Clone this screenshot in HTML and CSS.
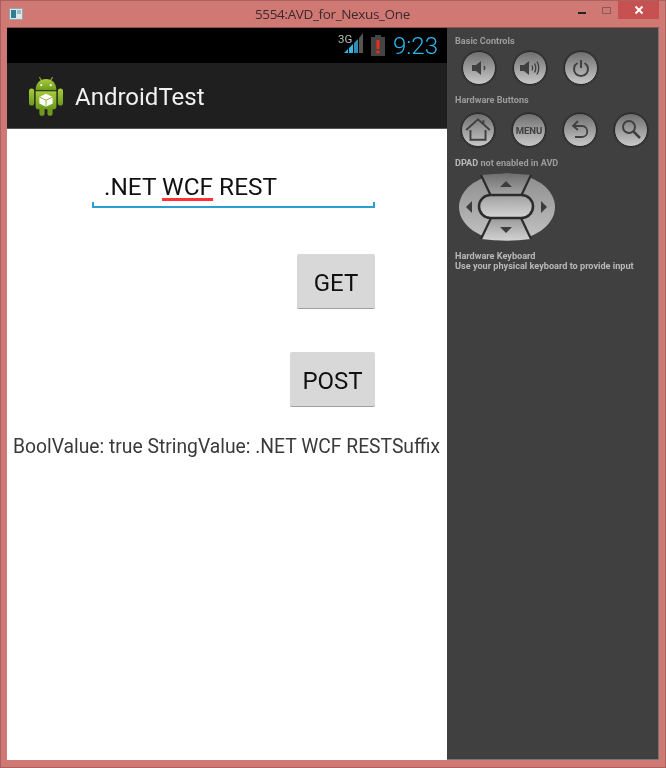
FILE: index.html
```html
<!DOCTYPE html>
<html lang="en">
<head>
    <meta charset="UTF-8">
    <meta name="viewport" content="width=device-width, initial-scale=1.0">
    <title>5554:AVD_for_Nexus_One</title>
    <link rel="stylesheet" href="styles.css">
</head>
<body>
    <div class="window">
        <div class="titlebar">
            <svg class="app-icon" width="14" height="12" viewBox="0 0 14 12">
                <rect x="0.5" y="0.5" width="13" height="11" fill="#dfe6e8" stroke="#9aa5ab"/>
                <rect x="2" y="2" width="5" height="8" fill="#2f7f8f"/>
                <rect x="8" y="2" width="4" height="4" fill="#8fc0c4"/>
            </svg>
            <div class="window-title">5554:AVD_for_Nexus_One</div>
            <div class="window-controls">
                <span class="win-min"></span>
                <span class="win-max"></span>
                <span class="win-close">
                    <svg width="10" height="10" viewBox="0 0 10 10">
                        <path d="M1.5 1.5 L8.5 8.5 M8.5 1.5 L1.5 8.5" stroke="#fff" stroke-width="2"/>
                    </svg>
                </span>
            </div>
        </div>

        <div class="client">
            <div class="phone">
                <div class="status-bar">
                    <div class="signal">
                        <span class="signal-3g">3G</span>
                        <svg width="20" height="24" viewBox="0 0 20 24">
                            <path d="M0 22 L4 22 L4 18 Z" fill="#33b5e5"/>
                            <path d="M5 22 L9 22 L9 13 L5 17 Z" fill="#33b5e5"/>
                            <path d="M10 22 L14 22 L14 8 L10 12 Z" fill="#2b8fb5"/>
                            <path d="M15 22 L19 22 L19 2 L15 7 Z" fill="#555"/>
                        </svg>
                    </div>
                    <svg class="battery" width="14" height="21" viewBox="0 0 14 21">
                        <rect x="4" y="0" width="6" height="2" fill="#444"/>
                        <rect x="0" y="2" width="14" height="19" fill="#444"/>
                        <rect x="5.5" y="5" width="3" height="9" fill="#e8301c"/>
                        <rect x="5.5" y="15.5" width="3" height="3" fill="#e8301c"/>
                    </svg>
                    <span class="clock">9:23</span>
                </div>
                <div class="action-bar">
                    <svg class="robot" width="34" height="40" viewBox="0 0 36 42">
                        <defs>
                            <linearGradient id="robotGreen" x1="0" y1="0" x2="0" y2="1">
                                <stop offset="0" stop-color="#a6cc3c"/>
                                <stop offset="1" stop-color="#6d9a1c"/>
                            </linearGradient>
                        </defs>
                        <path d="M11 1 L13.500 5 M25 1 L22.500 5" stroke="#7fa828" stroke-width="1.200"/>
                        <path d="M7 15 C7 7 12 3 18 3 C24 3 29 7 29 15 Z" fill="url(#robotGreen)"/>
                        <circle cx="13" cy="9.500" r="1.100" fill="#fff"/>
                        <circle cx="23" cy="9.500" r="1.100" fill="#fff"/>
                        <rect x="0" y="13" width="5.500" height="18" rx="2.700" fill="url(#robotGreen)"/>
                        <rect x="30.500" y="13" width="5.500" height="18" rx="2.700" fill="url(#robotGreen)"/>
                        <path d="M7 16 H29 V32 Q29 35 26 35 H10 Q7 35 7 32 Z" fill="url(#robotGreen)"/>
                        <rect x="11" y="33" width="5.500" height="9" rx="2.700" fill="#6d9a1c"/>
                        <rect x="19.500" y="33" width="5.500" height="9" rx="2.700" fill="#6d9a1c"/>
                        <path d="M18 18.500 L25 22 V29 L18 32.500 L11 29 V22 Z" fill="#fff"/>
                        <path d="M11 22 L18 25.500 L25 22 M18 25.500 V32.500" stroke="#8db22e" stroke-width="1" fill="none"/>
                    </svg>
                    <span class="app-name">AndroidTest</span>
                </div>
                <div class="screen">
                    <div class="form">
                        <div class="edit">
                            <div class="edit-text">.NET <span class="misspelled">WCF</span> REST</div>
                            <div class="edit-line"></div>
                        </div>
                        <button class="btn btn-get">GET</button>
                        <button class="btn btn-post">POST</button>
                    </div>
                    <div class="result">BoolValue: true StringValue: .NET WCF RESTSuffix</div>
                </div>
            </div>

            <div class="panel">
                <div class="panel-label label-basic">Basic Controls</div>
                <div class="round-row row-basic">
                    <div class="round-btn">
                        <svg width="20" height="20" viewBox="0 0 20 20">
                            <path d="M3 7 H7 L12 3 V17 L7 13 H3 Z" fill="#404040"/>
                            <path d="M15 8 Q16.500 10 15 12" stroke="#404040" stroke-width="1.500" fill="none"/>
                        </svg>
                    </div>
                    <div class="round-btn">
                        <svg width="24" height="20" viewBox="0 0 24 20">
                            <path d="M2 7 H6 L11 3 V17 L6 13 H2 Z" fill="#404040"/>
                            <path d="M14 7.500 Q15.500 10 14 12.500 M16.500 5.500 Q19 10 16.500 14.500 M19 3.500 Q22.500 10 19 16.500" stroke="#404040" stroke-width="1.400" fill="none"/>
                        </svg>
                    </div>
                    <div class="round-btn">
                        <svg width="20" height="20" viewBox="0 0 20 20">
                            <path d="M6.500 5 A7 7 0 1 0 13.500 5" stroke="#404040" stroke-width="2" fill="none"/>
                            <path d="M10 2 V10" stroke="#404040" stroke-width="2"/>
                        </svg>
                    </div>
                </div>
                <div class="panel-label label-hardware">Hardware Buttons</div>
                <div class="round-row">
                    <div class="round-btn">
                        <svg width="28" height="26" viewBox="0 0 26 24">
                            <path d="M2 12 L13 2 L24 12 M6 12 V21 H20 V12 M18 3 V7" stroke="#404040" stroke-width="1.800" fill="none"/>
                        </svg>
                    </div>
                    <div class="round-btn menu-btn">MENU</div>
                    <div class="round-btn">
                        <svg width="22" height="22" viewBox="0 0 22 22">
                            <path d="M9 2 L4 7 L9 11 M4 7 H13 C20 7 20 18 13 18 H6" stroke="#404040" stroke-width="1.800" fill="none"/>
                        </svg>
                    </div>
                    <div class="round-btn">
                        <svg width="24" height="24" viewBox="0 0 24 24">
                            <circle cx="10" cy="9" r="6" stroke="#404040" stroke-width="2" fill="none"/>
                            <path d="M14.500 13.500 L21 20" stroke="#404040" stroke-width="2.500"/>
                        </svg>
                    </div>
                </div>
                <div class="panel-label label-dpad"><span class="label-strong">DPAD</span> not enabled in AVD</div>
                <svg class="dpad" width="98" height="68" viewBox="0 0 98 68">
                    <defs>
                        <linearGradient id="padGrey" x1="0" y1="0" x2="0" y2="1">
                            <stop offset="0" stop-color="#8c8c8c"/>
                            <stop offset="1" stop-color="#c4c4c4"/>
                        </linearGradient>
                        <linearGradient id="padUp" x1="0" y1="0" x2="0" y2="1">
                            <stop offset="0" stop-color="#6e6e6e"/>
                            <stop offset="1" stop-color="#a8a8a8"/>
                        </linearGradient>
                        <linearGradient id="padDown" x1="0" y1="0" x2="0" y2="1">
                            <stop offset="0" stop-color="#9a9a9a"/>
                            <stop offset="1" stop-color="#d2d2d2"/>
                        </linearGradient>
                        <linearGradient id="padMid" x1="0" y1="0" x2="0" y2="1">
                            <stop offset="0" stop-color="#a0a0a0"/>
                            <stop offset="1" stop-color="#d6d6d6"/>
                        </linearGradient>
                    </defs>
                    <ellipse cx="49" cy="34" rx="48" ry="33.500" fill="url(#padGrey)"/>
                    <path d="M23 2 Q49 -1 73 2 L63 23 H33 Z" fill="url(#padUp)"/>
                    <path d="M33 45 H63 L73 66 Q49 69 23 66 Z" fill="url(#padDown)"/>
                    <path d="M23 2 L33 23 M73 2 L63 23 M23 66 L33 45 M73 66 L63 45" stroke="#2c2c2c" stroke-width="2.200"/>
                    <rect x="21" y="22" width="54" height="23" rx="11.500" fill="url(#padMid)" stroke="#2c2c2c" stroke-width="2.500"/>
                    <path d="M48 8 L54 14 H42 Z" fill="#3c3c3c"/>
                    <path d="M48 60 L54 54 H42 Z" fill="#3c3c3c"/>
                    <path d="M8 34 L14 28 V40 Z" fill="#3c3c3c"/>
                    <path d="M89 34 L83 28 V40 Z" fill="#3c3c3c"/>
                </svg>
                <div class="panel-label label-keyboard label-strong">Hardware Keyboard</div>
                <div class="panel-label label-strong">Use your physical keyboard to provide input</div>
            </div>
        </div>
    </div>
</body>
</html>
```

FILE: styles.css
```css
html, body {
    margin: 0;
    padding: 0;
}

body {
    width: 666px;
    height: 768px;
    overflow: hidden;
    font-family: Roboto, "Liberation Sans", sans-serif;
}

.window {
    width: 666px;
    height: 768px;
    box-sizing: border-box;
    display: flex;
    flex-direction: column;
    background: #cf7874;
    border: 1px solid #a9625f;
    filter: blur(0.4px);
}

/* title bar */
.titlebar {
    height: 26px;
    flex: none;
    display: flex;
    align-items: flex-start;
    position: relative;
}

.app-icon {
    margin: 7px 0 0 8px;
}

.window-title {
    position: absolute;
    left: 254px;
    top: 4px;
    font-family: "Open Sans", sans-serif;
    font-size: 13.500px;
    letter-spacing: -0.35px;
    color: #3c2a2a;
    white-space: nowrap;
}

.window-controls {
    margin-left: auto;
    margin-right: 6px;
    display: flex;
    align-items: flex-start;
}

.win-min {
    width: 8px;
    height: 2px;
    margin: 11px 16px 0 0;
    background: #222;
}

.win-max {
    width: 7px;
    height: 5px;
    margin: 6px 7px 0 0;
    border: 1px solid #8a5a5a;
}

.win-close {
    width: 41px;
    height: 18px;
    background: #c75050;
    display: flex;
    align-items: center;
    justify-content: center;
}

/* client area */
.client {
    display: flex;
    height: 732px;
    margin: 0 6px;
    border-top: 1px solid #8d5552;
}

/* phone */
.phone {
    width: 440px;
    flex: none;
    display: flex;
    flex-direction: column;
    background: #fff;
}

.status-bar {
    height: 35px;
    flex: none;
    background: #000;
    display: flex;
    align-items: center;
    justify-content: flex-end;
    padding-right: 9px;
}

.signal {
    display: flex;
    align-items: flex-start;
    position: relative;
    margin-right: 7px;
    margin-top: -6px;
}

.signal-3g {
    position: absolute;
    left: -6px;
    top: 1px;
    font-size: 11.500px;
    color: #bbb;
}

.battery {
    margin-right: 8px;
}

.clock {
    font-size: 24px;
    font-weight: 300;
    color: #2fb8f0;
}

.action-bar {
    height: 66px;
    flex: none;
    background: #1f1f1f;
    display: flex;
    align-items: center;
    box-sizing: border-box;
    padding-left: 22px;
    border-bottom: 1px solid #555;
}

.app-name {
    margin-left: 12px;
    padding-top: 2px;
    font-size: 24px;
    color: #f0f0f0;
}

.screen {
    flex: 1;
    display: flex;
    flex-direction: column;
}

.form {
    width: 283px;
    margin: 0 0 0 85px;
    display: flex;
    flex-direction: column;
    align-items: flex-end;
}

.edit {
    width: 100%;
    margin-top: 42px;
}

.edit-text {
    padding-left: 12px;
    font-size: 24.400px;
    line-height: 32px;
    color: #111;
    height: 32px;
}

.misspelled {
    text-decoration: underline;
    text-decoration-color: #f33;
    text-decoration-thickness: 3px;
    text-underline-offset: 3px;
    text-decoration-skip-ink: none;
}

.edit-line {
    height: 4px;
    margin-top: -1px;
    border: 2px solid #2a9fd0;
    border-top: none;
}

.btn {
    display: block;
    height: 55px;
    padding: 3px 0 0;
    border: none;
    border-bottom: 1px solid #a0a0a0;
    border-radius: 2px;
    background: #d8d8d8;
    font-family: Roboto, sans-serif;
    font-size: 24px;
    color: #111;
}

.btn-get {
    width: 78px;
    margin-top: 46px;
}

.btn-post {
    width: 85px;
    margin-top: 43px;
}

.result {
    margin: 28px 0 0 6px;
    font-size: 19.300px;
    color: #3a3a3a;
    white-space: nowrap;
}

/* side panel */
.panel {
    flex: 1;
    background: #404040;
    box-sizing: border-box;
    padding: 8px 0 0 8px;
    border-bottom: 1px solid #777;
    border-right: 1px solid #777;
}

.panel-label {
    font-size: 9.150px;
    line-height: 10px;
    font-weight: 700;
    color: #9c9c9c;
    white-space: nowrap;
}

.label-strong {
    color: #b8b8b8;
}

.round-row {
    display: flex;
    gap: 17px;
    margin-left: 6px;
}

.row-basic {
    margin-left: 7px;
    margin-top: 5px;
}

.round-btn {
    width: 34px;
    height: 34px;
    flex: none;
    box-sizing: border-box;
    border-radius: 50%;
    border: 1px solid #2a2a2a;
    background: linear-gradient(#6f6f6f, #c8c8c8);
    box-shadow: 0 0 0 1px #333;
    display: flex;
    align-items: center;
    justify-content: center;
}

.menu-btn {
    font-size: 9.500px;
    font-weight: 700;
    color: #404040;
}

.label-hardware {
    margin-top: 10px;
    margin-bottom: 8px;
}

.label-dpad {
    margin-top: 11px;
}

.dpad {
    display: block;
    margin: 5px 0 0 3px;
}

.label-keyboard {
    margin-top: 10px;
}
```
